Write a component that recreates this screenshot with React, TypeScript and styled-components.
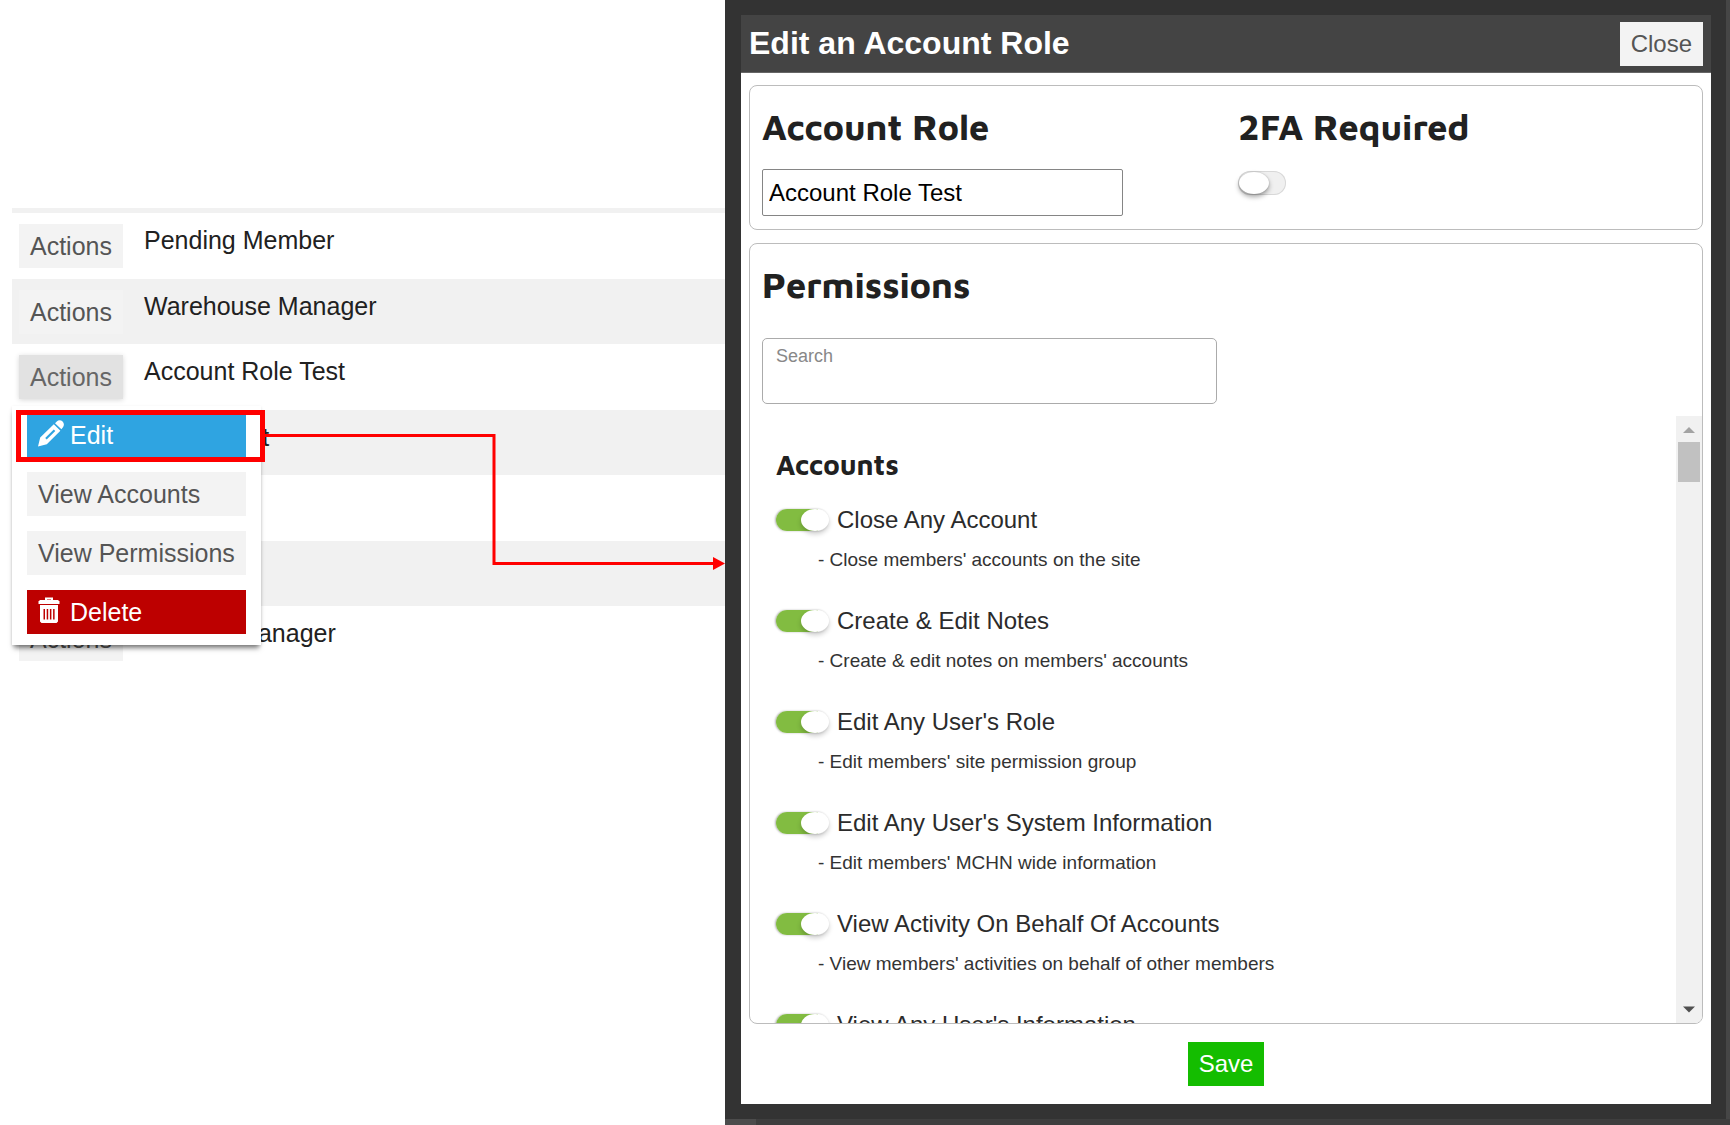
import React, { useState } from 'react';
import styled, { createGlobalStyle } from 'styled-components';

const GlobalStyle = createGlobalStyle`
  * { box-sizing: border-box; }
  body {
    margin: 0;
    background: #fff;
    color: #212121;
    font-family: Arial, "Liberation Sans", sans-serif;
    font-size: 25px;
  }
  button, input { font-family: inherit; }
`;

const Page = styled.div`
  display: grid;
  grid-template-columns: 725px minmax(0, 1fr);
  height: 100vh;
  overflow: hidden;
`;

/* ---------- Role list ---------- */

const RolesPane = styled.main`
  position: relative;
  padding: 208px 0 0 12px;
`;

const RolesTable = styled.table`
  width: 100%;
  border-collapse: separate;
  border-spacing: 0;
  border-top: 5px solid #f1f1f1;
`;

const RoleRow = styled.tr`
  height: 66px;
  &:nth-child(even) {
    height: 65px;
    background: #f1f1f1;
  }
`;

const ActionCell = styled.td`
  width: 132px;
  padding: 11px 7px 0;
  vertical-align: top;
`;

const NameCell = styled.td`
  padding: 13px 0 0;
  line-height: 28px;
  vertical-align: top;
`;

const ActionWrap = styled.div`
  position: relative;
  width: 104px;
`;

const Button = styled.button<{ $tone?: 'plain' | 'pressed' | 'blue' | 'red' | 'green'; $size?: number }>`
  display: flex;
  align-items: center;
  gap: 5px;
  height: 44px;
  padding: 0 11px;
  border: 0;
  font-size: ${(p) => p.$size ?? 25}px;
  line-height: 28px;
  white-space: nowrap;
  cursor: pointer;
  color: ${(p) => (!p.$tone || p.$tone === 'plain' ? '#555' : p.$tone === 'pressed' ? '#666' : '#fff')};
  background: ${(p) =>
    ({ plain: '#f3f3f3', pressed: '#e2e2e2', blue: '#2fa4e1', red: '#bd0000', green: '#14bd00' })[p.$tone ?? 'plain']};
  box-shadow: ${(p) => (p.$tone === 'pressed' ? '0 1px 5px rgba(0, 0, 0, 0.16)' : 'none')};
`;

const Menu = styled.div`
  position: absolute;
  z-index: 2;
  top: 51px;
  left: -7px;
  display: grid;
  gap: 15px;
  width: 249px;
  padding: 7px 15px 11px;
  background: #fff;
  box-shadow: 0 5px 5px -2px rgba(0, 0, 0, 0.5), 0 1px 3px rgba(0, 0, 0, 0.1);
`;

const Annotation = styled.svg`
  position: absolute;
  z-index: 3;
  top: 0;
  left: 0;
  pointer-events: none;
`;

/* ---------- Dialog ---------- */

const Backdrop = styled.div`
  height: 100vh;
  padding: 0 4px 6px 0;
  background: linear-gradient(#4c4c4c, #4c4c4c) 0 100% / 31px 6px no-repeat,
    linear-gradient(#3e3e3e, #3e3e3e) 0 100% / 100% 6px no-repeat, #464646;
`;

const DialogFrame = styled.section`
  display: flex;
  flex-direction: column;
  height: 100%;
  padding: 15px 15px 15px 16px;
  background: #333;
`;

const DialogHeader = styled.header`
  display: flex;
  align-items: center;
  justify-content: space-between;
  height: 58px;
  padding: 0 8px;
  border-bottom: 1px solid #666;
  background: #444;
`;

const DialogTitle = styled.h1`
  margin: 0;
  padding-bottom: 2px;
  color: #fff;
  font-size: 32px;
  line-height: 36px;
`;

const DialogBody = styled.form`
  display: flex;
  flex: 1;
  flex-direction: column;
  min-height: 0;
  padding: 12px 8px 18px;
  background: #fff;
`;

const Panel = styled.div`
  padding: 18px 12px 13px;
  border: 1px solid #bcbcbc;
  border-radius: 8px;
`;

const DetailsPanel = styled(Panel)`
  display: grid;
  grid-template-columns: 1fr 1fr;
  gap: 24px;
  margin-bottom: 13px;
`;

const PermissionsPanel = styled(Panel)`
  display: flex;
  flex: 1;
  flex-direction: column;
  min-height: 0;
  margin-bottom: 18px;
  padding: 18px 0 0 12px;
  overflow: hidden;
`;

const Heading = styled.h2`
  margin: 0;
  font: 700 36px/46px "Maven Pro", "Noto Sans", sans-serif;
`;

const HeadingLabel = styled.label`
  display: block;
  margin-bottom: 19px;
  font: 700 36px/46px "Maven Pro", "Noto Sans", sans-serif;
`;

const TextInput = styled.input`
  display: block;
  width: 361px;
  height: 47px;
  padding: 0 6px;
  border: 1px solid #858585;
  border-radius: 2px;
  color: #000;
  font-size: 24px;
`;

const Toggle = styled.input<{ $wide?: boolean }>`
  position: relative;
  display: block;
  flex: none;
  width: ${(p) => (p.$wide ? 53 : 48)}px;
  height: ${(p) => (p.$wide ? 22 : 24)}px;
  margin: 0;
  border-radius: 12px;
  appearance: none;
  background: #f0f0f0;
  box-shadow: inset 0 0 0 1px #d8d8d8;
  cursor: pointer;

  &::before {
    content: '';
    position: absolute;
    top: 1px;
    left: 1px;
    width: 30px;
    height: 22px;
    border-radius: 50%;
    background: #fff;
    box-shadow: 0 3px 5px rgba(0, 0, 0, 0.35), 0 0 2px rgba(0, 0, 0, 0.2);
  }

  &:checked {
    background: linear-gradient(#82bc41, #82bc41) 0 0 / 42px 100% no-repeat;
    box-shadow: -1px 0 2px rgba(0, 0, 0, 0.3);
  }

  &:checked::before {
    top: 0;
    right: 0;
    left: auto;
    width: 28px;
    box-shadow: 0 3px 5px rgba(0, 0, 0, 0.2);
  }
`;

const ToggleSlot = styled.div`
  padding-top: 2px;
`;

const SearchBox = styled.label`
  display: flex;
  flex: none;
  flex-direction: column;
  width: 455px;
  height: 66px;
  margin: 30px 0 12px;
  padding: 7px 13px;
  border: 1px solid #ababab;
  border-radius: 5px;
  color: #888;
  font-size: 18px;
  line-height: 20px;
`;

const SearchInput = styled.input`
  width: 100%;
  height: 30px;
  padding: 0;
  border: 0;
  outline: 0;
  background: transparent;
  font-size: 24px;
`;

const ScrollArea = styled.div`
  display: flex;
  flex: 1;
  min-height: 0;
`;

const PermissionList = styled.div`
  flex: 1;
  padding: 31px 14px 0;
  overflow-y: auto;
  scrollbar-width: none;
`;

const GroupHeading = styled.h3`
  margin: 0 0 23px;
  font: 700 28px/36px "Maven Pro", "Noto Sans", sans-serif;
`;

const Permission = styled.div`
  padding-bottom: 36px;
`;

const PermissionLabel = styled.label`
  display: flex;
  align-items: center;
  gap: 8px;
  margin-bottom: 15px;
  color: #2b2b2b;
  font-size: 24px;
  line-height: 28px;
`;

const PermissionNote = styled.p`
  margin: 0;
  padding-left: 42px;
  color: #333;
  font-size: 19px;
  line-height: 22px;
`;

const ScrollBar = styled.div`
  display: flex;
  flex-direction: column;
  align-items: center;
  width: 26px;
  background: #f1f1f1;
`;

const ScrollThumb = styled.div`
  width: 22px;
  height: 40px;
  margin-bottom: auto;
  background: #c1c1c1;
`;

const ScrollArrow = styled.svg`
  display: block;
  flex: none;
  width: 12px;
  height: 26px;
`;

const SaveRow = styled.div`
  display: flex;
  justify-content: center;
`;

/* ---------- Icons ---------- */

const ButtonIcon = styled.svg`
  display: block;
  width: 27px;
  height: 27px;
  margin-bottom: 4px;
`;

const PencilIcon = () => (
  <ButtonIcon viewBox="0 0 27 27" aria-hidden="true">
    <path
      fill="#fff"
      fillRule="evenodd"
      d="M0 26.500 2.200 17.600 15.800 4.200l6.600 6.600L8.800 24.200zM7.200 18l1.500 1.500 8.600-8.500-1.500-1.500z"
    />
    <path fill="#fff" d="m17 3.200 1.800-1.800Q20 .3 21.600.3q1.700 0 3 1.300t1.300 3q0 1.600-1.100 2.800L23.400 9.200z" />
  </ButtonIcon>
);

const TrashIcon = () => (
  <ButtonIcon viewBox="0 0 27 27" aria-hidden="true">
    <path d="M8 3.500V1.500h6v2" fill="none" stroke="#fff" strokeWidth="2" />
    <path d="M2 3h18l1.500 1.500V7H.5V4.500z" fill="#fff" />
    <path
      d="M2 8h18v16.500L18.500 26h-15L2 24.500zM5.500 12v10.500H7V12zM8.700 12v10.500h1.500V12zM11.900 12v10.500h1.500V12zM15.100 12v10.500h1.500V12z"
      fill="#fff"
      fillRule="evenodd"
    />
  </ButtonIcon>
);

const roles = [
  'Pending Member',
  'Warehouse Manager',
  'Account Role Test',
  'Accountant',
  'Editor',
  'Support',
  'Product Manager',
];

const permissions = [
  { name: 'Close Any Account', note: "Close members' accounts on the site" },
  { name: 'Create & Edit Notes', note: "Create & edit notes on members' accounts" },
  { name: "Edit Any User's Role", note: "Edit members' site permission group" },
  { name: "Edit Any User's System Information", note: "Edit members' MCHN wide information" },
  { name: 'View Activity On Behalf Of Accounts', note: "View members' activities on behalf of other members" },
  { name: "View Any User's Information", note: "View members' information" },
];

const openRole = 'Account Role Test';

function ActionMenu() {
  return (
    <Menu>
      <Button $tone="blue">
        <PencilIcon />
        Edit
      </Button>
      <Button>View Accounts</Button>
      <Button>View Permissions</Button>
      <Button $tone="red">
        <TrashIcon />
        Delete
      </Button>
    </Menu>
  );
}

function EditRoleDialog() {
  const [name, setName] = useState(openRole);
  return (
    <Backdrop>
      <DialogFrame role="dialog" aria-labelledby="dialog-title">
        <DialogHeader>
          <DialogTitle id="dialog-title">Edit an Account Role</DialogTitle>
          <Button $size={24}>Close</Button>
        </DialogHeader>
        <DialogBody onSubmit={(e) => e.preventDefault()}>
          <DetailsPanel>
            <div>
              <HeadingLabel htmlFor="role-name">Account Role</HeadingLabel>
              <TextInput id="role-name" value={name} onChange={(e) => setName(e.target.value)} />
            </div>
            <div>
              <HeadingLabel htmlFor="two-factor">2FA Required</HeadingLabel>
              <ToggleSlot>
                <Toggle id="two-factor" type="checkbox" />
              </ToggleSlot>
            </div>
          </DetailsPanel>
          <PermissionsPanel>
            <Heading>Permissions</Heading>
            <SearchBox>
              Search
              <SearchInput type="text" />
            </SearchBox>
            <ScrollArea>
              <PermissionList>
                <GroupHeading>Accounts</GroupHeading>
                {permissions.map((p) => (
                  <Permission key={p.name}>
                    <PermissionLabel>
                      <Toggle $wide type="checkbox" defaultChecked />
                      {p.name}
                    </PermissionLabel>
                    <PermissionNote>- {p.note}</PermissionNote>
                  </Permission>
                ))}
              </PermissionList>
              <ScrollBar aria-hidden="true">
                <ScrollArrow viewBox="0 0 12 26">
                  <path d="M0 17 6 11l6 6z" fill="#a3a3a3" />
                </ScrollArrow>
                <ScrollThumb />
                <ScrollArrow viewBox="0 0 12 26">
                  <path d="M0 9.500h12l-6 6z" fill="#505050" />
                </ScrollArrow>
              </ScrollBar>
            </ScrollArea>
          </PermissionsPanel>
          <SaveRow>
            <Button $tone="green" $size={24} type="submit">
              Save
            </Button>
          </SaveRow>
        </DialogBody>
      </DialogFrame>
    </Backdrop>
  );
}

export default function App() {
  return (
    <>
      <GlobalStyle />
      <Page>
        <RolesPane>
          <RolesTable>
            <tbody>
              {roles.map((role) => (
                <RoleRow key={role}>
                  <ActionCell>
                    <ActionWrap>
                      <Button $tone={role === openRole ? 'pressed' : 'plain'}>Actions</Button>
                      {role === openRole && <ActionMenu />}
                    </ActionWrap>
                  </ActionCell>
                  <NameCell>{role}</NameCell>
                </RoleRow>
              ))}
            </tbody>
          </RolesTable>
          <Annotation width="725" height="700" viewBox="0 0 725 700" aria-hidden="true">
            <rect x="18.500" y="412.500" width="244" height="47" fill="none" stroke="#f00" strokeWidth="5" />
            <path d="M264 435.500H494V563.500H714" fill="none" stroke="#f00" strokeWidth="3" />
            <path d="m713 557 12 6.500-12 6.500z" fill="#f00" />
          </Annotation>
        </RolesPane>
        <EditRoleDialog />
      </Page>
    </>
  );
}
